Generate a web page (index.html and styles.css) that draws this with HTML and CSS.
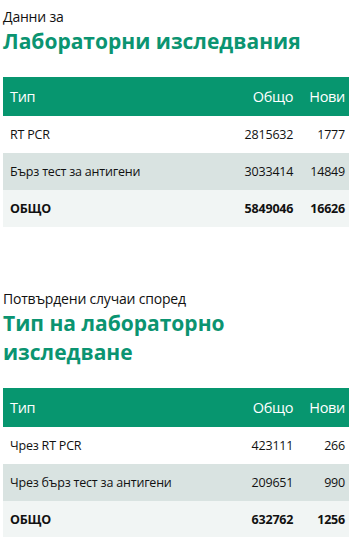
FILE: index.html
```html
<!DOCTYPE html>
<html lang="bg">
<head>
<meta charset="utf-8">
<link rel="stylesheet" href="styles.css">
</head>
<body>
<section class="block">
  <div class="sub">Данни за</div>
  <h2 class="title">Лабораторни изследвания</h2>
  <table class="data">
    <thead>
      <tr><th class="name">Тип</th><th>Общо</th><th>Нови</th></tr>
    </thead>
    <tbody>
      <tr><td class="name">RT PCR</td><td>2815632</td><td>1777</td></tr>
      <tr class="alt"><td class="name">Бърз тест за антигени</td><td>3033414</td><td>14849</td></tr>
      <tr class="total"><td class="name">ОБЩО</td><td>5849046</td><td>16626</td></tr>
    </tbody>
  </table>
</section>
<section class="block second">
  <div class="sub">Потвърдени случаи според</div>
  <h2 class="title">Тип на лабораторно изследване</h2>
  <table class="data">
    <thead>
      <tr><th class="name">Тип</th><th>Общо</th><th>Нови</th></tr>
    </thead>
    <tbody>
      <tr><td class="name">Чрез RT PCR</td><td>423111</td><td>266</td></tr>
      <tr class="alt"><td class="name">Чрез бърз тест за антигени</td><td>209651</td><td>990</td></tr>
      <tr class="total"><td class="name">ОБЩО</td><td>632762</td><td>1256</td></tr>
    </tbody>
  </table>
</section>
</body>
</html>
```
FILE: styles.css
```css
html, body { margin: 0; padding: 0; background: #fff; }
body {
  font-family: "Open Sans", "Noto Sans", "Liberation Sans", sans-serif;
  color: #111;
  padding: 0 3px;
}
.block { padding-top: 7px; }
.second { margin-top: 55px; }
.sub { font-size: 14px; line-height: 20px; letter-spacing: -0.2px; }
.title {
  margin: 0 0 21px;
  font-size: 21px;
  line-height: 29px;
  font-weight: 700;
  color: #0b9471;
  letter-spacing: 0;
  width: 260px;
}
.block:first-child .title { width: auto; }
.data { width: 100%; border-collapse: collapse; font-size: 12.5px; letter-spacing: -0.2px; }
.data th, .data td { padding: 0 4px 0 12px; text-align: right; white-space: nowrap; }
.data .name { text-align: left; padding-left: 7px; width: 100%; }
.data th { background: #07966f; color: #fff; font-weight: 400; font-size: 14.5px; letter-spacing: -0.3px; height: 39px; }
.data td { height: 37px; }
.data tr.alt td { background: #d9e3e1; }
.data tr.total td { background: #f1f5f4; font-weight: 700; }
```
